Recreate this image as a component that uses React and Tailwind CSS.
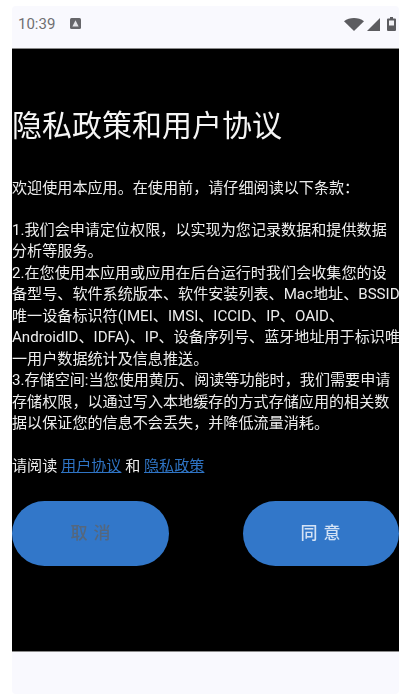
const FONT = "font-['Roboto','Noto_Sans_CJK_SC',sans-serif]";
const C = "\uFF0C";
const K = "\uFF1A";

function StatusBar() {
  return (
    <div className="h-[42px] bg-[#f9f9fe] flex items-start justify-between pt-[8px] pl-[6px] pr-[3px] rounded-t-[4px]">
      <div className="flex items-center gap-[15px] text-[#6f6f72]">
        <span className="text-[15px] leading-[20px] font-['Roboto',sans-serif]">10:39</span>
        <svg width="11" height="11" viewBox="0 0 11 11" className="-mt-[2px]">
          <rect x="0" y="0" width="11" height="11" rx="1.5" fill="#66666a" />
          <path d="M5.5 2.2 L8.6 8.6 H2.4 Z" fill="#e4e4e8" />
        </svg>
      </div>
      <div className="flex items-center gap-[3px] pt-[3px]">
        <svg width="20" height="13" viewBox="0 0 20 13">
          <path d="M0 3.2 C5.5 -1 14.5 -1 20 3.2 L10 13 Z" fill="#5c5c60" />
        </svg>
        <svg width="13" height="13" viewBox="0 0 13 13">
          <path d="M0 13 L13 0 V13 Z" fill="#5c5c60" />
        </svg>
        <svg width="9" height="14" viewBox="0 0 9 14" className="ml-[4px]">
          <path d="M3 0 H6 V1.5 H8 a1 1 0 0 1 1 1 V13 a1 1 0 0 1 -1 1 H1 a1 1 0 0 1 -1 -1 V2.5 a1 1 0 0 1 1 -1 H3 Z" fill="#5c5c60" />
          <rect x="2" y="3.5" width="5" height="5" fill="#f1f1f5" />
        </svg>
      </div>
    </div>
  );
}

export default function App() {
  return (
    <div className="w-[400px] h-[695px] bg-white pl-[12px] pr-[1.5px] pt-[6px] overflow-hidden">
      <div className={`h-[688px] flex flex-col blur-[0.4px] ${FONT}`}>
        <StatusBar />
        <main className="h-[604px] bg-black border-y border-[#8a8a8a] text-[#ededed] overflow-hidden">
          <h1 className="mt-[57px] text-[30px] leading-[40px] text-[#f5f5f5] whitespace-nowrap">隐私政策和用户协议</h1>
          <div className="mt-[32px] text-[15.1px] leading-[21.5px] whitespace-nowrap">
            <p>欢迎使用本应用。在使用前{C}请仔细阅读以下条款{K}</p>
            <div className="h-[20px]" />
            <p>
              1.我们会申请定位权限{C}以实现为您记录数据和提供数据<br />
              分析等服务。
            </p>
            <p>
              2.在您使用本应用或应用在后台运行时我们会收集您的设<br />
              备型号、软件系统版本、软件安装列表、Mac地址、BSSID<br />
              唯一设备标识符(IMEI、IMSI、ICCID、IP、OAID、<br />
              AndroidID、IDFA)、IP、设备序列号、蓝牙地址用于标识唯<br />
              一用户数据统计及信息推送。
            </p>
            <p>
              3.存储空间:当您使用黄历、阅读等功能时{C}我们需要申请<br />
              存储权限{C}以通过写入本地缓存的方式存储应用的相关数<br />
              据以保证您的信息不会丢失{C}并降低流量消耗。
            </p>
            <div className="h-[21px]" />
            <p>
              请阅读 <a className="text-[#2f74c4] underline">用户协议</a> 和 <a className="text-[#2f74c4] underline">隐私政策</a>
            </p>
          </div>
          <div className="mt-[24px] flex justify-between">
            <button className="w-[157px] h-[65px] pl-[6px] rounded-full bg-[#3277c9] text-[#55677d] text-[17px] tracking-[6px] font-medium">取消</button>
            <button className="w-[156px] h-[65px] pl-[6px] rounded-full bg-[#3277c9] text-[#d3e2f5] text-[17px] tracking-[6px] font-medium">同意</button>
          </div>
        </main>
        <div className="h-[42px] bg-[#f9f9fe] rounded-b-[4px]" />
      </div>
    </div>
  );
}
